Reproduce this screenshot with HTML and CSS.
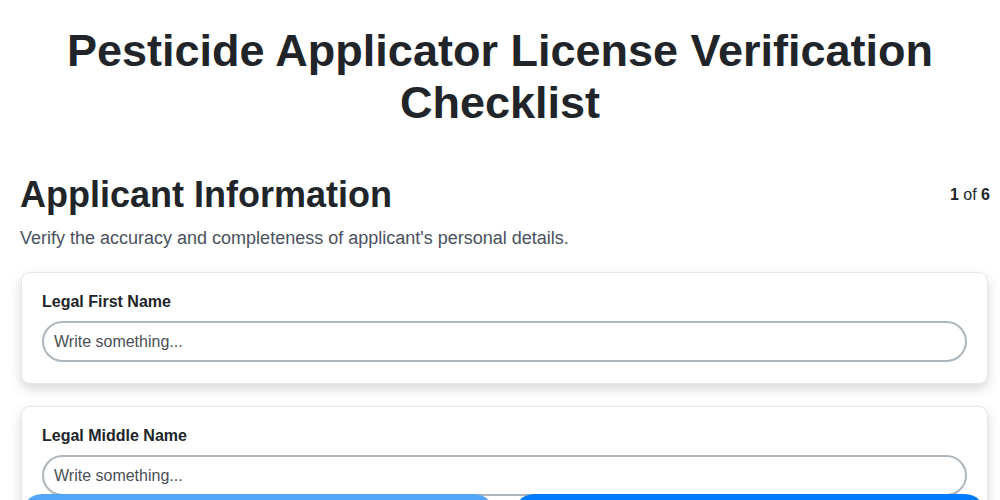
FILE: index.html
```html
<!DOCTYPE html>
<html lang="en">
<head>
<meta charset="utf-8">
<title>Pesticide Applicator License Verification Checklist</title>
<link rel="stylesheet" href="styles.css">
</head>
<body>
<div class="page">
  <h1 class="title">Pesticide Applicator License Verification Checklist</h1>
  <section class="step">
    <div class="step-head">
      <h2 class="step-title">Applicant Information</h2>
      <div class="step-count"><b>1</b> of <b>6</b></div>
    </div>
    <p class="step-desc">Verify the accuracy and completeness of applicant's personal details.</p>
    <div class="cards">
      <div class="card">
        <label class="label">Legal First Name</label>
        <input class="field" type="text" placeholder="Write something...">
      </div>
      <div class="card">
        <label class="label">Legal Middle Name</label>
        <input class="field" type="text" placeholder="Write something...">
      </div>
    </div>
  </section>
</div>
<div class="nav">
  <button class="btn btn-prev">Previous</button>
  <button class="btn btn-next">Next</button>
</div>
</body>
</html>
```

FILE: styles.css
```css
* { box-sizing: border-box; }
html, body { margin: 0; padding: 0; background: #fff; }
body {
  font-family: "Liberation Sans", Arial, sans-serif;
  color: #212529;
  overflow: hidden;
}
.page {
  padding: 25px 11px 80px 20px;
}
.title {
  margin: 0;
  text-align: center;
  font-size: 45px;
  line-height: 52px;
  font-weight: 700;
  color: #212529;
  padding: 0 44px 0 35px;
}
.step { margin-top: 44px; }
.step-head {
  display: flex;
  justify-content: space-between;
  align-items: flex-start;
}
.step-title {
  margin: 0;
  font-size: 36px;
  line-height: 44px;
  font-weight: 700;
}
.step-count {
  font-size: 16px;
  line-height: 18px;
  margin-top: 13px;
  margin-right: -1px;
}
.step-desc {
  margin: 11px 0 0 0;
  font-size: 18px;
  line-height: 21px;
  color: #4a5160;
}
.cards {
  margin-top: 23px;
  display: flex;
  flex-direction: column;
  gap: 22px;
}
.card {
  background: #fff;
  border: 1px solid #e6e7ec;
  border-radius: 9px;
  box-shadow: 0 5px 12px rgba(0, 0, 0, 0.16);
  padding: 19px 20px 21px 20px;
  margin: 0 1px 0 1px;
}
.label {
  display: block;
  font-size: 16px;
  line-height: 19px;
  font-weight: 700;
  color: #212529;
  margin-bottom: 10px;
}
.field {
  display: block;
  width: 100%;
  height: 41px;
  border: 2px solid #adb5bd;
  border-radius: 21px;
  padding: 0 10px;
  font-family: "Liberation Sans", Arial, sans-serif;
  font-size: 16px;
  color: #212529;
  background: #fff;
  outline: none;
}
.field::placeholder { color: #4a4f58; opacity: 1; }
.nav {
  position: fixed;
  left: 22px;
  right: 15px;
  bottom: -56px;
  display: flex;
  gap: 20px;
}
.btn {
  flex: 1;
  height: 62px;
  padding-top: 40px;
  border: none;
  border-radius: 20px;
  color: #fff;
  font-family: "Liberation Sans", Arial, sans-serif;
  font-size: 16px;
  font-weight: 700;
}
.btn-prev { background: #52a5f8; }
.btn-next { background: #007bff; }
```
